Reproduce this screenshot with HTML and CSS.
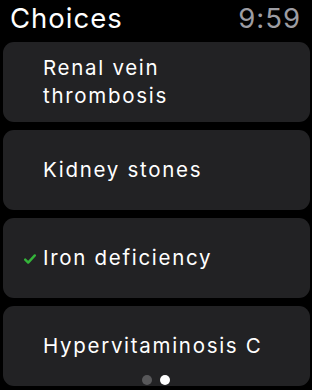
FILE: index.html
```html
<!DOCTYPE html>
<html lang="en">
<head>
    <meta charset="UTF-8">
    <meta name="viewport" content="width=device-width, initial-scale=1.0">
    <title>Choices</title>
    <link rel="stylesheet" href="styles.css">
</head>
<body>
    <div class="header">
        <h1>Choices</h1>
        <span class="time">9:59</span>
    </div>

    <ul class="choices">
        <li class="choice">
            <span class="check"></span>
            <span class="label">Renal vein<br>thrombosis</span>
        </li>
        <li class="choice">
            <span class="check"></span>
            <span class="label">Kidney stones</span>
        </li>
        <li class="choice selected">
            <span class="check">
                <svg width="12" height="10" viewBox="0 0 12 10">
                    <path d="M1.2 5.6 L4.2 8.6 L10.8 1.4" fill="none" stroke="#34b53a" stroke-width="2.4" stroke-linecap="round" stroke-linejoin="round"/>
                </svg>
            </span>
            <span class="label">Iron deficiency</span>
        </li>
        <li class="choice">
            <span class="check"></span>
            <span class="label">Hypervitaminosis C</span>
        </li>
    </ul>

    <div class="pager">
        <span class="dot"></span>
        <span class="dot active"></span>
    </div>
</body>
</html>
```

FILE: styles.css
```css
* {
    margin: 0;
    padding: 0;
    box-sizing: border-box;
}

html, body {
    background: #000;
}

body {
    font-family: Inter, Roboto, sans-serif;
    color: #fff;
    width: 312px;
    height: 390px;
    overflow: hidden;
    position: relative;
}

.header {
    display: flex;
    justify-content: space-between;
    align-items: baseline;
    padding: 0 11px 0 10px;
    height: 42px;
}

h1 {
    font-size: 27.5px;
    font-weight: 400;
    line-height: 36px;
    letter-spacing: 1px;
}

.time {
    font-size: 27.5px;
    line-height: 36px;
    color: #9d9da3;
    letter-spacing: 1px;
}

.choices {
    list-style: none;
    display: flex;
    flex-direction: column;
    gap: 8px;
    padding: 0 2px 0 3px;
}

.choice {
    height: 80px;
    background: #222224;
    border-radius: 11px;
    display: flex;
    align-items: center;
}

.check {
    width: 40px;
    display: flex;
    justify-content: flex-end;
    padding-right: 7px;
    padding-top: 2px;
}

.label {
    font-size: 20.5px;
    line-height: 28px;
    letter-spacing: 1.7px;
}

.pager {
    position: absolute;
    left: 0;
    right: 0;
    bottom: 5px;
    display: flex;
    justify-content: center;
    gap: 8px;
}

.dot {
    width: 10px;
    height: 10px;
    border-radius: 50%;
    background: #58585a;
}

.dot.active {
    background: #fff;
}
```
